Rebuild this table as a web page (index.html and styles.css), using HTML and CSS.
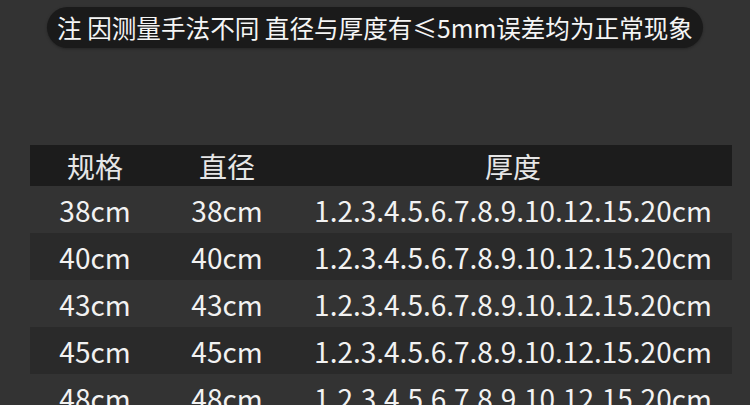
FILE: index.html
```html
<!DOCTYPE html>
<html lang="zh-CN">
<head>
    <meta charset="UTF-8">
    <meta name="viewport" content="width=device-width, initial-scale=1.0">
    <title>规格尺寸表</title>
    <link rel="stylesheet" href="styles.css">
</head>
<body>

<div class="page">
    <div class="notice-wrap">
        <div class="notice">注 因测量手法不同 直径与厚度有≤5mm误差均为正常现象</div>
    </div>

    <div class="spec-table">
        <div class="spec-row head">
            <div class="cell">规格</div>
            <div class="cell">直径</div>
            <div class="cell">厚度</div>
        </div>
        <div class="spec-row">
            <div class="cell">38cm</div>
            <div class="cell">38cm</div>
            <div class="cell">1.2.3.4.5.6.7.8.9.10.12.15.20cm</div>
        </div>
        <div class="spec-row stripe">
            <div class="cell">40cm</div>
            <div class="cell">40cm</div>
            <div class="cell">1.2.3.4.5.6.7.8.9.10.12.15.20cm</div>
        </div>
        <div class="spec-row">
            <div class="cell">43cm</div>
            <div class="cell">43cm</div>
            <div class="cell">1.2.3.4.5.6.7.8.9.10.12.15.20cm</div>
        </div>
        <div class="spec-row stripe">
            <div class="cell">45cm</div>
            <div class="cell">45cm</div>
            <div class="cell">1.2.3.4.5.6.7.8.9.10.12.15.20cm</div>
        </div>
        <div class="spec-row">
            <div class="cell">48cm</div>
            <div class="cell">48cm</div>
            <div class="cell">1.2.3.4.5.6.7.8.9.10.12.15.20cm</div>
        </div>
    </div>
</div>

</body>
</html>
```

FILE: styles.css
```css
body {
    margin: 0;
    background-color: #333333;
    font-family: "Noto Sans CJK SC", "Noto Sans", sans-serif;
    color: #f2f2f2;
    overflow: hidden;
}
.page {
    padding-top: 7px;
}
.notice-wrap {
    display: flex;
    justify-content: center;
}
.notice {
    width: 656px;
    height: 41px;
    line-height: 40px;
    background-color: #1a1a1a;
    border-radius: 21px;
    text-align: center;
    font-size: 24.6px;
    color: #f5f5f5;
    white-space: nowrap;
    box-shadow: 0 1px 3px rgba(0, 0, 0, 0.3);
}
.spec-table {
    margin: 97px 18px 0 30px;
}
.spec-row {
    display: grid;
    grid-template-columns: 130px 134px 1fr;
    height: 47px;
    align-items: center;
    font-size: 28px;
}
.spec-row.head {
    height: 41px;
    background-color: #1c1c1c;
    color: #e6e6e6;
}
.spec-row.stripe {
    background-color: #2a2a2a;
}
.cell {
    text-align: center;
    white-space: nowrap;
}
```
